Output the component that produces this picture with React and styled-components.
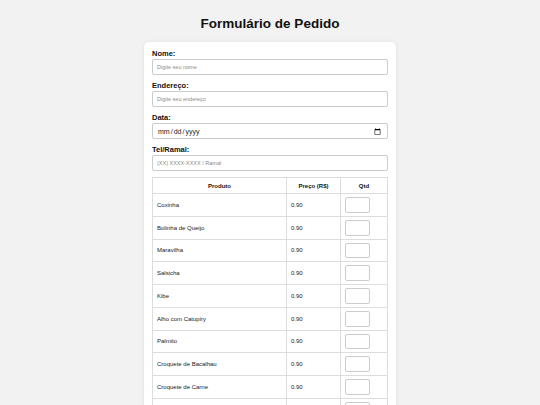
import React from 'react';
import styled, { createGlobalStyle } from 'styled-components';

const GlobalStyle = createGlobalStyle`
  body {
    margin: 0;
    background-color: #f2f2f2;
    font-family: "Liberation Sans", Arial, sans-serif;
    color: #222;
  }
`

const Page = styled.div`
  padding: 15px 0 20px;
`

const Title = styled.h1`
  font-size: 13.5px;
  font-weight: bold;
  text-align: center;
  margin: 0 0 9px;
  line-height: 18px;
  color: #111;
`

const Card = styled.form`
  width: 252px;
  margin: 0 auto;
  box-sizing: border-box;
  background-color: #fff;
  border-radius: 5px;
  padding: 7px 8px 8px;
  box-shadow: 0 0 4px rgba(0, 0, 0, 0.08);
`

const Field = styled.div`
  display: flex;
  flex-direction: column;
  margin-bottom: 6px;
`

const Label = styled.label`
  font-size: 7.5px;
  font-weight: bold;
  line-height: 10px;
  height: 10px;
  color: #111;
`

const Input = styled.input`
  box-sizing: border-box;
  height: 16px;
  width: 100%;
  margin: 0;
  padding: 0 4px;
  border: 1px solid #ccc;
  border-radius: 2px;
  font-family: "Liberation Sans", Arial, sans-serif;
  font-size: ${p => (p.type === 'date' ? '7px' : '5.5px')};
  color: #222;
  background: #fff;

  &::placeholder {
    color: #8a8a8a;
  }
`

const Table = styled.table`
  width: 100%;
  border-collapse: collapse;
  margin-top: 5px;
  font-size: 6px;
  color: #1a1a1a;
`

const Th = styled.th`
  border: 1px solid #ddd;
  height: 15px;
  padding: 0 4px;
  font-weight: bold;
  text-align: center;
  color: #111;
  width: ${p => p.$w};
`

const Td = styled.td`
  border: 1px solid #ddd;
  padding: 3px 3px 3px 4px;
  height: 15.75px;
  text-align: left;
`

const QtyInput = styled.input`
  box-sizing: border-box;
  width: 25px;
  height: 15.75px;
  margin: 0;
  display: block;
  border: 1px solid #ccc;
  border-radius: 2px;
  font-size: 6px;
`

const products = [
  'Coxinha',
  'Bolinha de Queijo',
  'Maravilha',
  'Salsicha',
  'Kibe',
  'Alho com Catupiry',
  'Palmito',
  'Croquete de Bacalhau',
  'Croquete de Carne',
  'Esfiha de Carne',
]

const fields = [
  { label: 'Nome:', type: 'text', placeholder: 'Digite seu nome' },
  { label: 'Endereço:', type: 'text', placeholder: 'Digite seu endereço' },
  { label: 'Data:', type: 'date' },
  { label: 'Tel/Ramal:', type: 'text', placeholder: '(XX) XXXX-XXXX / Ramal' },
]

const App = () => {
  return (
    <Page>
      <GlobalStyle />
      <Title>Formulário de Pedido</Title>
      <Card onSubmit={e => e.preventDefault()}>
        {fields.map(f => (
          <Field key={f.label}>
            <Label>{f.label}</Label>
            <Input type={f.type} placeholder={f.placeholder} />
          </Field>
        ))}
        <Table>
          <thead>
            <tr>
              <Th $w="57%">Produto</Th>
              <Th $w="23%">Preço (R$)</Th>
              <Th $w="20%">Qtd</Th>
            </tr>
          </thead>
          <tbody>
            {products.map(p => (
              <tr key={p}>
                <Td>{p}</Td>
                <Td>0.90</Td>
                <Td><QtyInput type="number" min="0" /></Td>
              </tr>
            ))}
          </tbody>
        </Table>
      </Card>
    </Page>
  )
}

export default App
